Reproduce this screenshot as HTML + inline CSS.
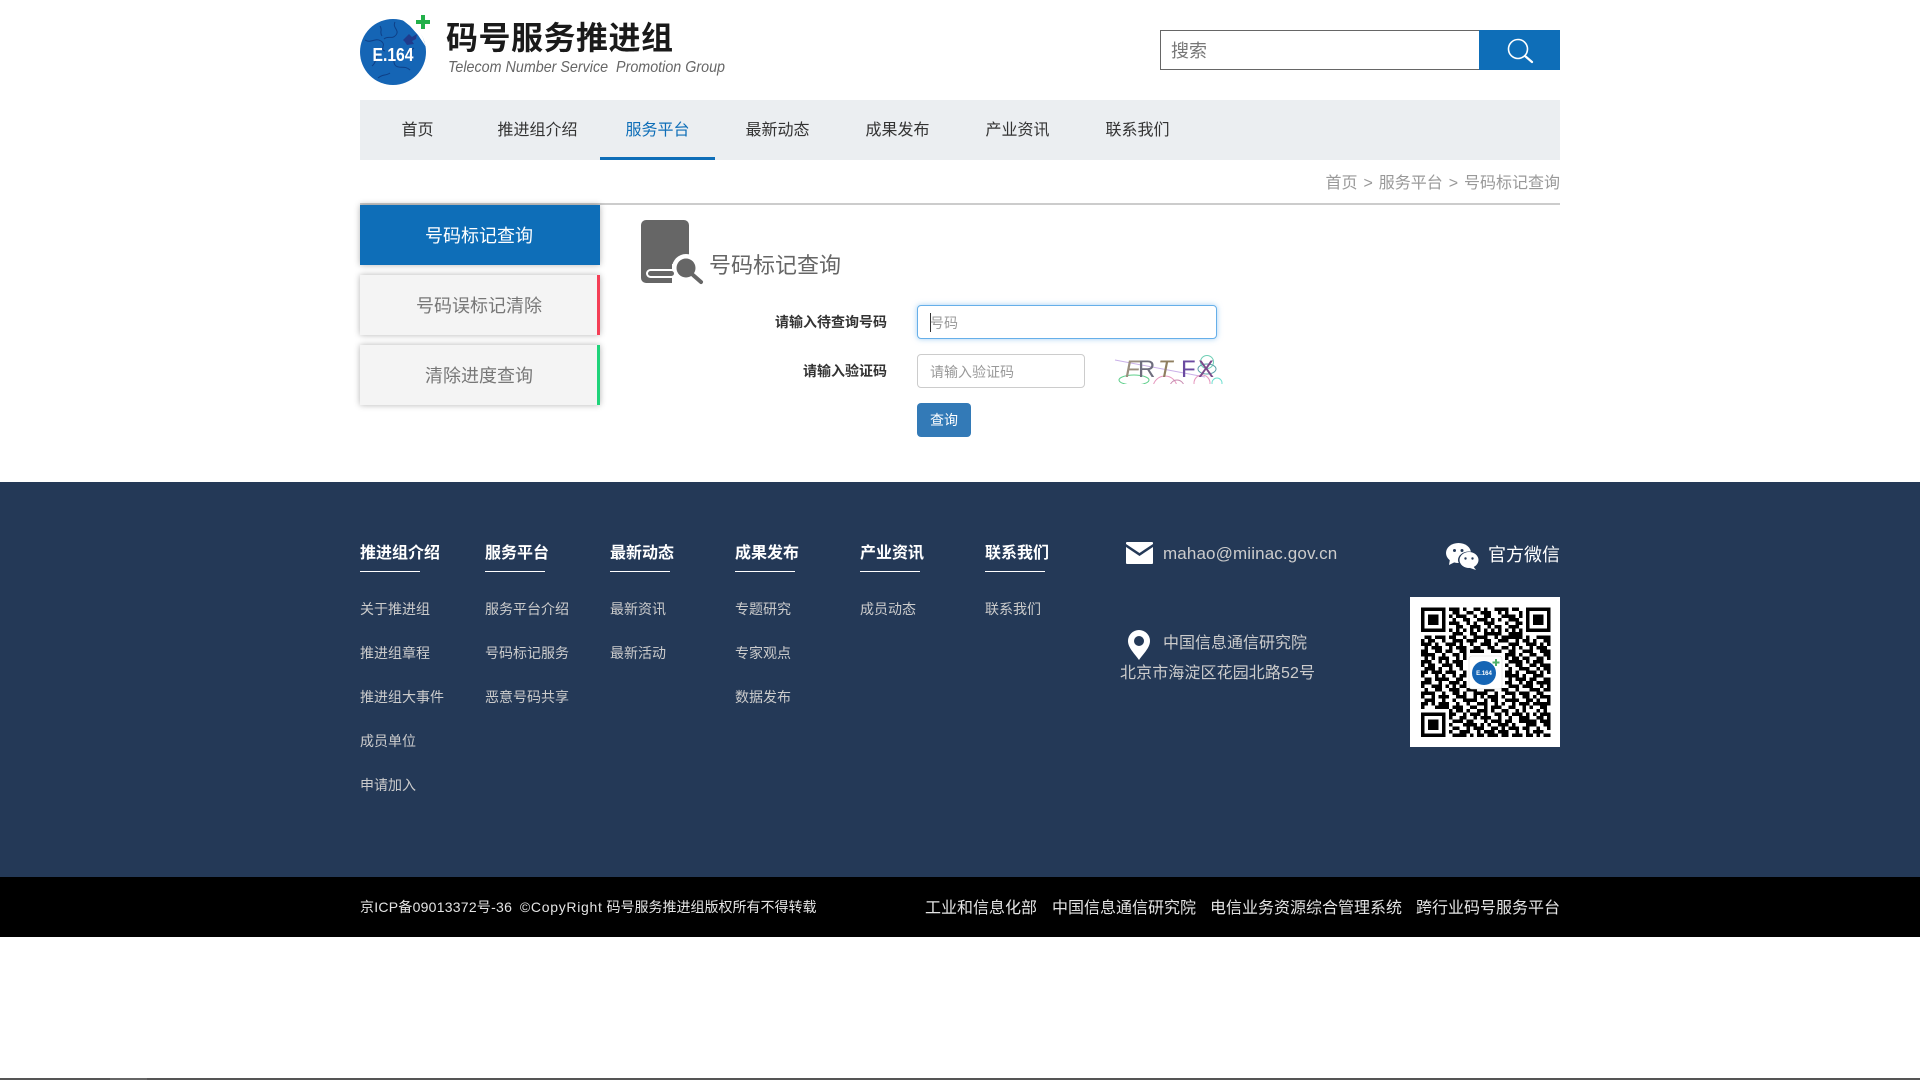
<!DOCTYPE html>
<html lang="zh-CN"><head><meta charset="utf-8"><title>号码标记查询</title>
<style>
*{box-sizing:border-box;margin:0;padding:0}
html,body{width:1920px;height:1080px;background:#fff;overflow:hidden;position:relative;font-family:"Liberation Sans","Noto Sans CJK SC",sans-serif}
.a{position:absolute}
.t{position:absolute;white-space:nowrap}
.nav{font-size:16px;line-height:20px;top:121px;color:#333;width:115px;text-align:center}
.sb{position:absolute;left:360px;width:240px;height:60px;line-height:62px;padding-right:2px;text-align:center;font-size:18px;color:#777;background:#f4f4f4;box-shadow:0 0 6px rgba(0,0,0,.3)}
.fh{position:absolute;top:544px;font-size:16px;line-height:20px;font-weight:bold;color:#fff;white-space:nowrap}
.fl{position:absolute;top:571px;width:60px;height:1px;background:#fff}
.fi{position:absolute;font-size:14px;line-height:20px;color:#ccc;white-space:nowrap}
.lb{position:absolute;right:1033px;font-size:14px;line-height:20px;font-weight:bold;color:#333;white-space:nowrap}
.br{position:absolute;font-size:16px;line-height:20px;color:#e4e4e4;top:899px;white-space:nowrap}
</style></head><body>

<svg class="a" style="left:355px;top:8px" width="85" height="80" viewBox="355 8 85 80">
<circle cx="393" cy="52" r="33" fill="#1565b5"/>
<path d="M400 18l8 1 5 5 6 6 4 8 3 9-8-12-8-9z" fill="#fff"/>
<path d="M403 40l6-6 3 3 5-3-1 5-4 2 2 3-7 1-2-3z" fill="#1f3b8c"/>
<path d="M365 40c6 4 10-3 16 1s-2 8 4 10M372 66c6-5 2-10 8-12M395 22c-3 6 5 8 1 13s-8 0-12 4M410 70c-5-5-10-1-14-4s0-8-5-10M378 78c4-4 8-2 12-5M414 48c-4 2-2 6-8 6M380 26c3 4-1 6 2 10" fill="none" stroke="#0e3f86" stroke-width="1"/>
<text x="393" y="61" text-anchor="middle" font-family="Liberation Sans" font-weight="bold" font-size="18" fill="#fff" textLength="41" lengthAdjust="spacingAndGlyphs">E.164</text>
<path d="M421 15h4v5h5v4h-5v5h-4v-5h-5v-4h5z" fill="#22b04a"/>
</svg>
<div class="t" style="left:446px;top:16px;font-size:32px;line-height:44px;font-weight:bold;color:#1a1a1a;letter-spacing:.5px">码号服务推进组</div>
<svg class="a" style="left:445px;top:55px" width="290" height="24"><text x="3" y="17" font-family="Liberation Sans" font-style="italic" font-size="16" fill="#666" textLength="277" lengthAdjust="spacingAndGlyphs" xml:space="preserve">Telecom Number Service  Promotion Group</text></svg>

<div class="a" style="left:1160px;top:30px;width:320px;height:40px;border:1px solid #666;background:#fff"></div>
<div class="t" style="left:1171px;top:38px;font-size:18px;line-height:26px;color:#777">搜索</div>
<div class="a" style="left:1479px;top:30px;width:81px;height:40px;background:#0e6eb8"></div>
<svg class="a" style="left:1500px;top:30px" width="40" height="40"><circle cx="18" cy="19" r="9.500" fill="none" stroke="#fff" stroke-width="1.600"/><path d="M25 26l7 6" stroke="#fff" stroke-width="2.200" stroke-linecap="round"/></svg>

<div class="a" style="left:360px;top:100px;width:1200px;height:60px;background:#ebeef1"></div>
<div class="a" style="left:600px;top:157px;width:115px;height:3px;background:#0e6eb8"></div>
<div class="t nav" style="left:360px">首页</div>
<div class="t nav" style="left:480px">推进组介绍</div>
<div class="t nav" style="left:600px;color:#0e6eb8">服务平台</div>
<div class="t nav" style="left:720px">最新动态</div>
<div class="t nav" style="left:840px">成果发布</div>
<div class="t nav" style="left:960px">产业资讯</div>
<div class="t nav" style="left:1080px">联系我们</div>

<div class="t" style="right:360px;top:174px;font-size:16px;line-height:20px;color:#999">首页<span style="margin:0 1.500px"> &gt; </span>服务平台<span style="margin:0 1.500px"> &gt; </span>号码标记查询</div>
<div class="a" style="left:360px;top:203px;width:1200px;height:2px;background:#ccc"></div>

<div class="sb" style="top:205px;background:#0e6eb8;color:#fff">号码标记查询</div>
<div class="sb" style="top:275px">号码误标记清除<div class="a" style="right:0;top:0;width:3px;height:60px;background:#f43f56"></div></div>
<div class="sb" style="top:345px">清除进度查询<div class="a" style="right:0;top:0;width:3px;height:60px;background:#1fd37a"></div></div>

<svg class="a" style="left:640px;top:220px" width="66" height="66" viewBox="0 0 66 66">
<path d="M6 0h38a5 5 0 0 1 5 5v58H6a5 5 0 0 1-5-5V5a5 5 0 0 1 5-5z" fill="#666"/>
<rect x="36" y="57" width="20" height="9" fill="#fff"/>
<rect x="32" y="44" width="20" height="20" fill="#fff"/>
<circle cx="46" cy="48" r="14" fill="#fff"/>
<circle cx="46" cy="48" r="9.500" fill="#666"/>
<path d="M53 55l8 7" stroke="#666" stroke-width="4" stroke-linecap="round"/>
<rect x="7" y="50" width="28" height="7" rx="3.500" fill="#666" stroke="#fff" stroke-width="2"/>
</svg>
<div class="t" style="left:709px;top:251px;font-size:22px;line-height:30px;color:#666">号码标记查询</div>

<div class="lb" style="top:312px">请输入待查询号码</div>
<div class="lb" style="top:361px">请输入验证码</div>
<div class="a" style="left:917px;top:305px;width:300px;height:34px;border:1px solid #66afe9;border-radius:4px;background:#fff;box-shadow:0 0 6px rgba(102,175,233,.6)"></div>
<div class="a" style="left:930px;top:313px;width:1px;height:19px;background:#333"></div>
<div class="t" style="left:930px;top:313px;font-size:14px;line-height:20px;color:#999">号码</div>
<div class="a" style="left:917px;top:354px;width:168px;height:34px;border:1px solid #ccc;border-radius:4px;background:#fff"></div>
<div class="t" style="left:930px;top:362px;font-size:14px;line-height:20px;color:#999">请输入验证码</div>
<svg class="a" style="left:1105px;top:345px" width="125" height="39" viewBox="0 0 125 39">
<g fill="none" stroke-width="1">
<path d="M10 15L100 32" stroke="#c9b0e8"/>
<ellipse cx="29" cy="35" rx="15" ry="5" stroke="#5fcf8b"/>
<circle cx="60" cy="43" r="12" stroke="#e79ac0"/>
<circle cx="72" cy="42" r="7" stroke="#c88ab0"/>
<circle cx="97" cy="38" r="8" stroke="#e79ac0"/>
<circle cx="102" cy="17" r="6.500" stroke="#6fcfb5"/>
<ellipse cx="102" cy="24" rx="9" ry="5" stroke="#5a9fa8"/>
<circle cx="112" cy="38" r="5" stroke="#6fe0d0"/>
</g>
<g font-family="Liberation Sans" font-size="24">
<text x="20" y="32" fill="#9a8e7e" font-style="italic">F</text>
<text x="33" y="32" fill="#6e6e7e">R</text>
<text x="53" y="32" fill="#8f7f60" font-style="italic">T</text>
<text x="76" y="32" fill="#6a4aa0">F</text>
<text x="93" y="32" fill="#7a4a8a">X</text>
</g>
</svg>
<div class="a" style="left:917px;top:403px;width:54px;height:34px;background:#337ab7;border-radius:4px;color:#fff;font-size:14px;line-height:34px;text-align:center">查询</div>

<div class="a" style="left:0;top:482px;width:1920px;height:395px;background:#243957"></div>
<div class="a" style="left:0;top:877px;width:1920px;height:60px;background:#000"></div>
<div class="a" style="left:0;top:1078px;width:1920px;height:2px;background:#555"></div>
<div class="a" style="left:110px;top:1078px;width:37px;height:2px;background:#666"></div>

<div class="fh" style="left:360px">推进组介绍</div><div class="fl" style="left:360px"></div>
<div class="fh" style="left:485px">服务平台</div><div class="fl" style="left:485px"></div>
<div class="fh" style="left:610px">最新动态</div><div class="fl" style="left:610px"></div>
<div class="fh" style="left:735px">成果发布</div><div class="fl" style="left:735px"></div>
<div class="fh" style="left:860px">产业资讯</div><div class="fl" style="left:860px"></div>
<div class="fh" style="left:985px">联系我们</div><div class="fl" style="left:985px"></div>

<div class="fi" style="left:360px;top:599px">关于推进组</div>
<div class="fi" style="left:360px;top:643px">推进组章程</div>
<div class="fi" style="left:360px;top:687px">推进组大事件</div>
<div class="fi" style="left:360px;top:731px">成员单位</div>
<div class="fi" style="left:360px;top:775px">申请加入</div>
<div class="fi" style="left:485px;top:599px">服务平台介绍</div>
<div class="fi" style="left:485px;top:643px">号码标记服务</div>
<div class="fi" style="left:485px;top:687px">恶意号码共享</div>
<div class="fi" style="left:610px;top:599px">最新资讯</div>
<div class="fi" style="left:610px;top:643px">最新活动</div>
<div class="fi" style="left:735px;top:599px">专题研究</div>
<div class="fi" style="left:735px;top:643px">专家观点</div>
<div class="fi" style="left:735px;top:687px">数据发布</div>
<div class="fi" style="left:860px;top:599px">成员动态</div>
<div class="fi" style="left:985px;top:599px">联系我们</div>

<svg class="a" style="left:1126px;top:542px" width="27" height="22" viewBox="0 0 27 22"><path d="M1 0h25a1 1 0 0 1 1 1v1L13.500 11 0 2V1a1 1 0 0 1 1-1z" fill="#fff"/><path d="M0 5l13.500 9L27 5v16a1 1 0 0 1-1 1H1a1 1 0 0 1-1-1z" fill="#fff"/></svg>
<div class="t" style="left:1163px;top:544px;font-size:17px;line-height:20px;color:#ccc;letter-spacing:.13px">mahao@miinac.gov.cn</div>
<svg class="a" style="left:1128px;top:630px" width="22" height="30" viewBox="0 0 22 30"><path fill-rule="evenodd" d="M11 0a11 11 0 0 1 11 11c0 7-7 13-11 19C7 24 0 18 0 11A11 11 0 0 1 11 0zm0 6a5 5 0 1 0 0 10 5 5 0 0 0 0-10z" fill="#fff"/></svg>
<div class="t" style="left:1163px;top:634px;font-size:16px;line-height:20px;color:#ccc">中国信息通信研究院</div>
<div class="t" style="left:1120px;top:664px;font-size:16px;line-height:20px;color:#ccc;letter-spacing:.1px">北京市海淀区花园北路52号</div>

<svg class="a" style="left:1446px;top:543px" width="33" height="27" viewBox="0 0 33 27">
<ellipse cx="12.500" cy="10" rx="12.500" ry="10" fill="#fff"/><path d="M4 16l-1 6 6-3z" fill="#fff"/>
<ellipse cx="23" cy="17" rx="11" ry="8.500" fill="#243957"/>
<ellipse cx="23" cy="17" rx="9.500" ry="8" fill="#fff"/><path d="M27 23l3 4-6-2z" fill="#fff"/>
<circle cx="8.500" cy="7.500" r="1.500" fill="#243957"/><circle cx="16" cy="7.500" r="1.500" fill="#243957"/>
<circle cx="19.500" cy="15.500" r="1.200" fill="#243957"/><circle cx="26.500" cy="15.500" r="1.200" fill="#243957"/>
</svg>
<div class="t" style="left:1488px;top:543px;font-size:18px;line-height:24px;color:#fff">官方微信</div>

<svg class="a" style="left:1410px;top:597px" width="150" height="150" viewBox="0 0 150 150">
<rect width="150" height="150" fill="#fff"/>
<g transform="translate(11 10.500) scale(3.5)">
<path fill="none" stroke="#000" stroke-width="1" d="M0 .5h7M8 .5h3M12 .5h1M15 .5h2M18 .5h1M21 .5h4M26 .5h2M30 .5h7
M0 1.500h1M6 1.500h1M9 1.500h2M13 1.500h2M17 1.500h3M22 1.500h1M24 1.500h1M28 1.500h1M30 1.500h1M36 1.500h1
M0 2.500h1M2 2.500h3M6 2.500h1M8 2.500h1M10 2.500h3M15 2.500h1M18 2.500h2M23 2.500h4M28 2.500h1M30 2.500h1M32 2.500h3M36 2.500h1
M0 3.500h1M2 3.500h3M6 3.500h1M9 3.500h1M12 3.500h2M16 3.500h3M20 3.500h1M22 3.500h1M25 3.500h3M30 3.500h1M32 3.500h3M36 3.500h1
M0 4.500h1M2 4.500h3M6 4.500h1M8 4.500h3M13 4.500h1M15 4.500h1M18 4.500h3M24 4.500h1M27 4.500h2M30 4.500h1M32 4.500h3M36 4.500h1
M0 5.500h1M6 5.500h1M10 5.500h2M14 5.500h3M19 5.500h1M21 5.500h2M25 5.500h3M30 5.500h1M36 5.500h1
M0 6.500h7M8 6.500h1M10 6.500h1M12 6.500h1M14 6.500h1M16 6.500h1M18 6.500h1M20 6.500h1M22 6.500h1M24 6.500h1M26 6.500h1M28 6.500h1M30 6.500h7
M9 7.500h3M14 7.500h2M18 7.500h5M25 7.500h4
M1 8.500h2M4 8.500h3M8 8.500h2M12 8.500h1M15 8.500h4M21 8.500h1M23 8.500h6M30 8.500h1M33 8.500h4
M0 9.500h1M2 9.500h2M6 9.500h1M9 9.500h3M13 9.500h3M18 9.500h2M22 9.500h3M27 9.500h1M29 9.500h2M32 9.500h1M35 9.500h2
M0 10.500h3M4 10.500h1M7 10.500h3M11 10.500h1M14 10.500h1M17 10.500h3M21 10.500h1M25 10.500h3M30 10.500h3M34 10.500h1M36 10.500h1
M1 11.500h1M3 11.500h3M8 11.500h1M10 11.500h3M15 11.500h2M19 11.500h2M23 11.500h2M26 11.500h1M28 11.500h1M31 11.500h1M33 11.500h3
M0 12.500h2M4 12.500h2M7 12.500h2M11 12.500h2M14 12.500h4M20 12.500h3M25 12.500h2M29 12.500h3M34 12.500h3
M0 13.500h4M6 13.500h1M9 13.500h2M12 13.500h1M24 13.500h3M28 13.500h1M31 13.500h2M35 13.500h2
M1 14.500h1M3 14.500h1M5 14.500h3M10 14.500h1M12 14.500h1M24 14.500h1M26 14.500h2M29 14.500h2M33 14.500h2M36 14.500h1
M0 15.500h3M5 15.500h1M7 15.500h1M9 15.500h3M25 15.500h4M30 15.500h1M32 15.500h3
M0 16.500h1M2 16.500h2M6 16.500h3M10 16.500h2M24 16.500h1M27 16.500h2M31 16.500h2M34 16.500h3
M1 17.500h3M5 17.500h1M8 17.500h1M11 17.500h1M25 17.500h1M28 17.500h3M33 17.500h1M35 17.500h2
M0 18.500h2M3 18.500h3M7 18.500h3M12 18.500h1M24 18.500h2M27 18.500h1M30 18.500h3M34 18.500h1M36 18.500h1
M0 19.500h1M4 19.500h1M6 19.500h1M9 19.500h1M11 19.500h2M24 19.500h4M29 19.500h1M32 19.500h3
M1 20.500h2M4 20.500h4M10 20.500h2M25 20.500h1M27 20.500h3M31 20.500h2M35 20.500h2
M0 21.500h3M5 21.500h1M8 21.500h3M12 21.500h1M24 21.500h2M28 21.500h1M30 21.500h2M33 21.500h4
M0 22.500h1M3 22.500h3M7 22.500h1M9 22.500h1M11 22.500h2M25 22.500h3M29 22.500h3M34 22.500h1M36 22.500h1
M1 23.500h1M4 23.500h2M8 23.500h3M13 23.500h3M18 23.500h3M23 23.500h2M27 23.500h1M31 23.500h3M35 23.500h2
M0 24.500h4M6 24.500h1M9 24.500h2M12 24.500h1M15 24.500h4M21 24.500h1M24 24.500h3M28 24.500h3M33 24.500h2
M0 25.500h1M3 25.500h1M5 25.500h3M10 25.500h3M15 25.500h1M17 25.500h1M19 25.500h3M23 25.500h1M26 25.500h1M29 25.500h2M32 25.500h1M34 25.500h3
M1 26.500h3M6 26.500h1M9 26.500h1M12 26.500h4M18 26.500h1M20 26.500h2M24 26.500h4M30 26.500h2M33 26.500h1M36 26.500h1
M0 27.500h2M3 27.500h1M5 27.500h3M10 27.500h1M13 27.500h1M16 27.500h3M21 27.500h1M23 27.500h1M26 27.500h1M28 27.500h3M32 27.500h5
M0 28.500h1M4 28.500h4M9 28.500h3M14 28.500h2M18 28.500h1M20 28.500h3M25 28.500h2M29 28.500h1M31 28.500h1M34 28.500h2
M8 29.500h1M10 29.500h2M13 29.500h1M16 29.500h3M20 29.500h1M23 29.500h2M27 29.500h1M29 29.500h1M33 29.500h1M35 29.500h1
M0 30.500h7M8 30.500h2M12 30.500h1M14 30.500h3M18 30.500h1M21 30.500h2M24 30.500h1M26 30.500h3M30 30.500h1M32 30.500h1M34 30.500h3
M0 31.500h1M6 31.500h1M8 31.500h1M11 31.500h2M15 31.500h1M17 31.500h3M22 31.500h1M25 31.500h1M28 31.500h3M33 31.500h2M36 31.500h1
M0 32.500h1M2 32.500h3M6 32.500h1M9 32.500h3M13 32.500h2M18 32.500h1M20 32.500h3M24 32.500h2M28 32.500h5M34 32.500h3
M0 33.500h1M2 33.500h3M6 33.500h1M8 33.500h1M12 33.500h4M17 33.500h1M19 33.500h1M22 33.500h3M26 33.500h1M30 33.500h3M35 33.500h2
M0 34.500h1M2 34.500h3M6 34.500h1M9 34.500h2M13 34.500h1M15 34.500h3M20 34.500h2M23 34.500h1M25 34.500h3M29 34.500h2M33 34.500h1M36 34.500h1
M0 35.500h1M6 35.500h1M8 35.500h1M11 35.500h3M16 35.500h1M18 35.500h3M22 35.500h3M27 35.500h1M30 35.500h1M32 35.500h3
M0 36.500h7M9 36.500h4M14 36.500h1M16 36.500h2M19 36.500h3M23 36.500h2M26 36.500h3M30 36.500h2M33 36.500h1M35 36.500h2"/>
</g>
<rect x="59" y="59" width="33" height="33" rx="3" fill="#fff" stroke="#ddd" stroke-width=".6"/>
<circle cx="74" cy="76" r="12" fill="#1565b5"/>
<text x="74" y="78" text-anchor="middle" font-family="Liberation Sans" font-weight="bold" font-size="6" fill="#fff">E.164</text>
<path d="M85 62h2v2.500h2.500v2H87V69h-2v-2.500h-2.500v-2H85z" fill="#4caf6a"/>
</svg>

<div class="t" style="left:360px;top:897px;font-size:14px;line-height:20px;color:#e4e4e4"><span style="letter-spacing:.25px">京ICP备09013372号-36</span> &nbsp;<span style="letter-spacing:.7px">©CopyRight</span> 码号服务推进组版权所有不得转载</div>
<div class="br" style="left:925px">工业和信息化部</div>
<div class="br" style="left:1052px">中国信息通信研究院</div>
<div class="br" style="left:1210px">电信业务资源综合管理系统</div>
<div class="br" style="left:1416px">跨行业码号服务平台</div>
</body></html>
